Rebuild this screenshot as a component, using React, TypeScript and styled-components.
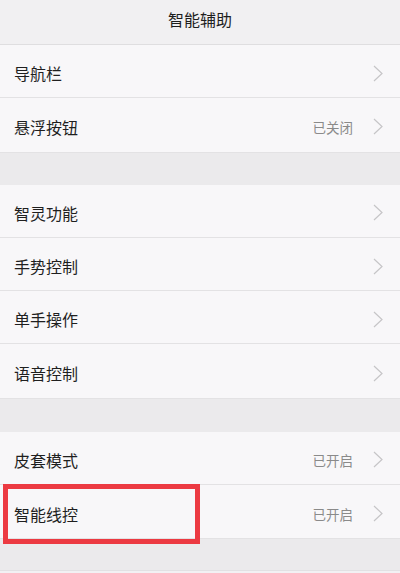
import React from "react";
import styled, { createGlobalStyle } from "styled-components";

const GlobalStyle = createGlobalStyle`
  html, body {
    margin: 0;
    padding: 0;
    background: #ebeaec;
  }
  * { box-sizing: border-box; }
`;

const Page = styled.div`
  width: 400px;
  height: 573px;
  overflow: hidden;
  background: #ebeaec;
  font-family: "Noto Sans CJK SC", "Noto Sans", sans-serif;
  display: flex;
  flex-direction: column;
`;

const Header = styled.div`
  height: 45px;
  flex: none;
  padding-top: 8px;
  background: #f1f0f2;
  border-bottom: 1px solid #dfdee0;
  text-align: center;
  font-size: 16px;
  line-height: 22px;
  color: #1e1e1e;
`;

const Group = styled.div`
  flex: none;
  background: #f8f7f9;
  border-bottom: 1px solid #e3e2e4;
`;

const Gap = styled.div<{ $h: number }>`
  flex: none;
  height: ${(p) => p.$h}px;
`;

const Row = styled.div<{ $last?: boolean }>`
  position: relative;
  height: 53.3px;
  padding: 4px 17px 0 14px;
  display: flex;
  align-items: center;
  border-bottom: ${(p) => (p.$last ? "none" : "1px solid #e3e2e4")};
`;

const Label = styled.span`
  flex: 1;
  font-size: 16px;
  color: #1f1f1f;
  letter-spacing: 0;
`;

const Value = styled.span`
  font-size: 13.5px;
  color: #8a8a8a;
  margin-right: 20px;
`;

const Chevron = styled.svg`
  width: 10px;
  height: 17px;
  flex: none;
`;

const Highlight = styled.div`
  position: absolute;
  left: 3px;
  top: -1px;
  width: 197px;
  height: 60px;
  border: 5px solid #ec3a42;
  pointer-events: none;
`;

const Bottom = styled.div`
  flex: 1;
  border-top: 1px solid #e2e1e3;
  background: #f2f1f3;
`;

const Arrow = () => (
  <Chevron viewBox="0 0 10 17">
    <polyline
      points="1,1 9,8.5 1,16"
      fill="none"
      stroke="#c6c5c7"
      strokeWidth="1.2"
    />
  </Chevron>
);

type Item = { label: string; value?: string; highlight?: boolean };

const groups: Item[][] = [
  [{ label: "导航栏" }, { label: "悬浮按钮", value: "已关闭" }],
  [
    { label: "智灵功能" },
    { label: "手势控制" },
    { label: "单手操作" },
    { label: "语音控制" },
  ],
  [
    { label: "皮套模式", value: "已开启" },
    { label: "智能线控", value: "已开启", highlight: true },
  ],
];

const gaps = [33, 34, 32];

export default function App() {
  return (
    <>
      <GlobalStyle />
      <Page>
        <Header>智能辅助</Header>
        {groups.map((g, gi) => (
          <React.Fragment key={gi}>
            <Group>
              {g.map((item, i) => (
                <Row key={item.label} $last={i === g.length - 1}>
                  <Label>{item.label}</Label>
                  {item.value && <Value>{item.value}</Value>}
                  <Arrow />
                  {item.highlight && <Highlight />}
                </Row>
              ))}
            </Group>
            <Gap $h={gaps[gi] - 1} />
          </React.Fragment>
        ))}
        <Bottom />
      </Page>
    </>
  );
}
